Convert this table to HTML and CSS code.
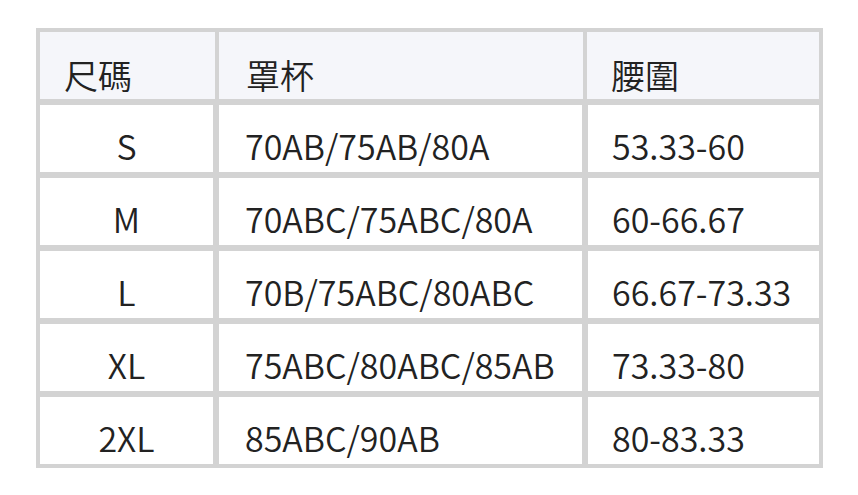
FILE: index.html
```html
<!DOCTYPE html>
<html lang="zh-Hant">
<head>
<meta charset="utf-8">
<link rel="stylesheet" href="styles.css">
</head>
<body>
<div class="size-table">
  <div class="cell head h1">尺碼</div>
  <div class="cell head h2">罩杯</div>
  <div class="cell head h3">腰圍</div>

  <div class="cell size">S</div>
  <div class="cell">70AB/75AB/80A</div>
  <div class="cell">53.33-60</div>

  <div class="cell size">M</div>
  <div class="cell">70ABC/75ABC/80A</div>
  <div class="cell">60-66.67</div>

  <div class="cell size">L</div>
  <div class="cell">70B/75ABC/80ABC</div>
  <div class="cell">66.67-73.33</div>

  <div class="cell size">XL</div>
  <div class="cell">75ABC/80ABC/85AB</div>
  <div class="cell">73.33-80</div>

  <div class="cell size">2XL</div>
  <div class="cell">85ABC/90AB</div>
  <div class="cell">80-83.33</div>
</div>
</body>
</html>
```

FILE: styles.css
```css
html, body {
  margin: 0;
  padding: 0;
  background: #ffffff;
}

body {
  font-family: "Noto Sans CJK TC", "Noto Sans", sans-serif;
  color: #222222;
}

.size-table {
  display: grid;
  grid-template-columns: 173px 363px 231px;
  grid-auto-rows: 67px;
  gap: 6px;
  padding: 4px;
  background: #d3d3d3;
  width: max-content;
  margin: 28px 0 0 36px;
}

.cell {
  background: #ffffff;
  display: flex;
  align-items: flex-end;
  font-size: 34px;
  font-weight: 350;
  line-height: 44px;
  padding: 0 0 4px 26px;
  box-sizing: border-box;
  white-space: nowrap;
}

.cell:nth-child(3n) {
  padding-left: 24px;
}

.head {
  background: #f5f6fa;
  padding-bottom: 2px;
}

.h1 {
  margin-right: -2px;
  padding-left: 24px;
}

.h2 {
  margin-right: -1px;
  padding-left: 27px;
}

.h3 {
  margin-left: -1px;
  padding-left: 25px;
}

.size {
  justify-content: center;
  padding-left: 0;
}
```
